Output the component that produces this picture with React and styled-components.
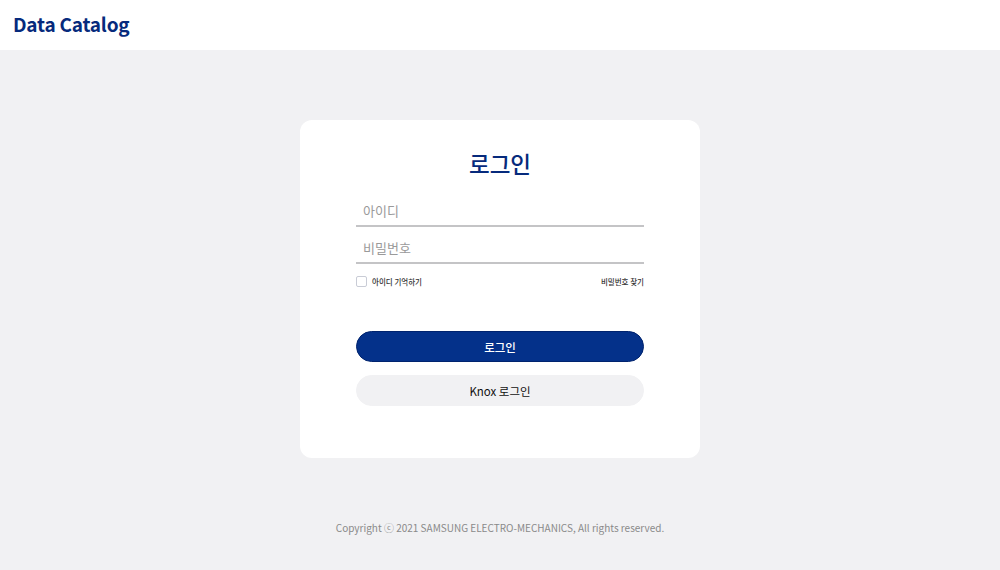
import styled, { createGlobalStyle } from 'styled-components';

const GlobalStyle = createGlobalStyle`
body{
    margin: 0;
    background: #f1f1f3;
    font-family: 'Noto Sans CJK KR', 'Noto Sans', sans-serif;
}
`

export default function App() {
    return (
        <Page>
            <GlobalStyle />
            <Header>
                <Logo>Data Catalog</Logo>
            </Header>
            <Main>
                <Card>
                    <Title>로그인</Title>
                    <Field type="text" placeholder="아이디" />
                    <Field type="password" placeholder="비밀번호" />
                    <OptionRow>
                        <Remember>
                            <Check />
                            <span>아이디 기억하기</span>
                        </Remember>
                        <FindLink>비밀번호 찾기</FindLink>
                    </OptionRow>
                    <Button primary>로그인</Button>
                    <Button>Knox 로그인</Button>
                </Card>
                <Footer>Copyright ⓒ 2021 SAMSUNG ELECTRO-MECHANICS, All rights reserved.</Footer>
            </Main>
        </Page>
    )
}

const Page = styled.div`
min-height: 570px;
display: flex;
flex-direction: column;
`
const Header = styled.header`
height: 50px;
box-sizing: border-box;
background: #ffffff;
display: flex;
align-items: center;
padding: 0 0 4px 13px;
`
const Logo = styled.h1`
margin: 0;
font-family: 'Noto Sans CJK KR', 'Noto Sans', sans-serif;
font-size: 19px;
font-weight: 700;
color: #062a7c;
letter-spacing: -0.2px;
`
const Main = styled.main`
display: flex;
flex-direction: column;
align-items: center;
padding-top: 70px;
`
const Card = styled.section`
width: 400px;
box-sizing: border-box;
background: #ffffff;
border-radius: 12px;
padding: 27px 56px 52px;
display: flex;
flex-direction: column;
`
const Title = styled.h2`
margin: 0 0 11px;
text-align: center;
font-size: 22.5px;
line-height: 32px;
font-weight: 500;
color: #062a7c;
`
const Field = styled.input`
height: 37px;
box-sizing: border-box;
border: none;
border-bottom: 2px solid #c4c4c6;
padding: 6px 7px 0;
font-family: 'Noto Sans CJK KR', 'Noto Sans', sans-serif;
font-size: 13px;
color: #333;
outline: none;
&::placeholder{
    color: #9a9a9a;
}
`
const OptionRow = styled.div`
display: flex;
justify-content: space-between;
align-items: center;
margin-top: 12px;
margin-bottom: 44px;
font-size: 7.5px;
font-weight: 500;
color: #333;
`
const Remember = styled.label`
display: flex;
align-items: center;
gap: 5px;
`
const Check = styled.span`
width: 9px;
height: 9px;
border: 1px solid #c9ccd6;
border-radius: 2px;
background: #ffffff;
`
const FindLink = styled.span`
color: #333;
`
const Button = styled.button`
height: 31px;
border-radius: 16px;
border: 1px solid ${props => props.primary ? '#00236e' : '#f1f1f3'};
background: ${props => props.primary ? '#04318a' : '#f1f1f3'};
color: ${props => props.primary ? '#ffffff' : '#111111'};
font-family: 'Noto Sans CJK KR', 'Noto Sans', sans-serif;
font-size: 11.5px;
font-weight: ${props => props.primary ? 500 : 400};
margin-bottom: 13px;
cursor: pointer;
&:last-child{
    margin-bottom: 0;
}
`
const Footer = styled.footer`
margin-top: 62px;
font-family: 'Noto Sans CJK KR', 'Noto Sans', sans-serif;
font-size: 10px;
line-height: 16px;
color: #8a8a8a;
`
